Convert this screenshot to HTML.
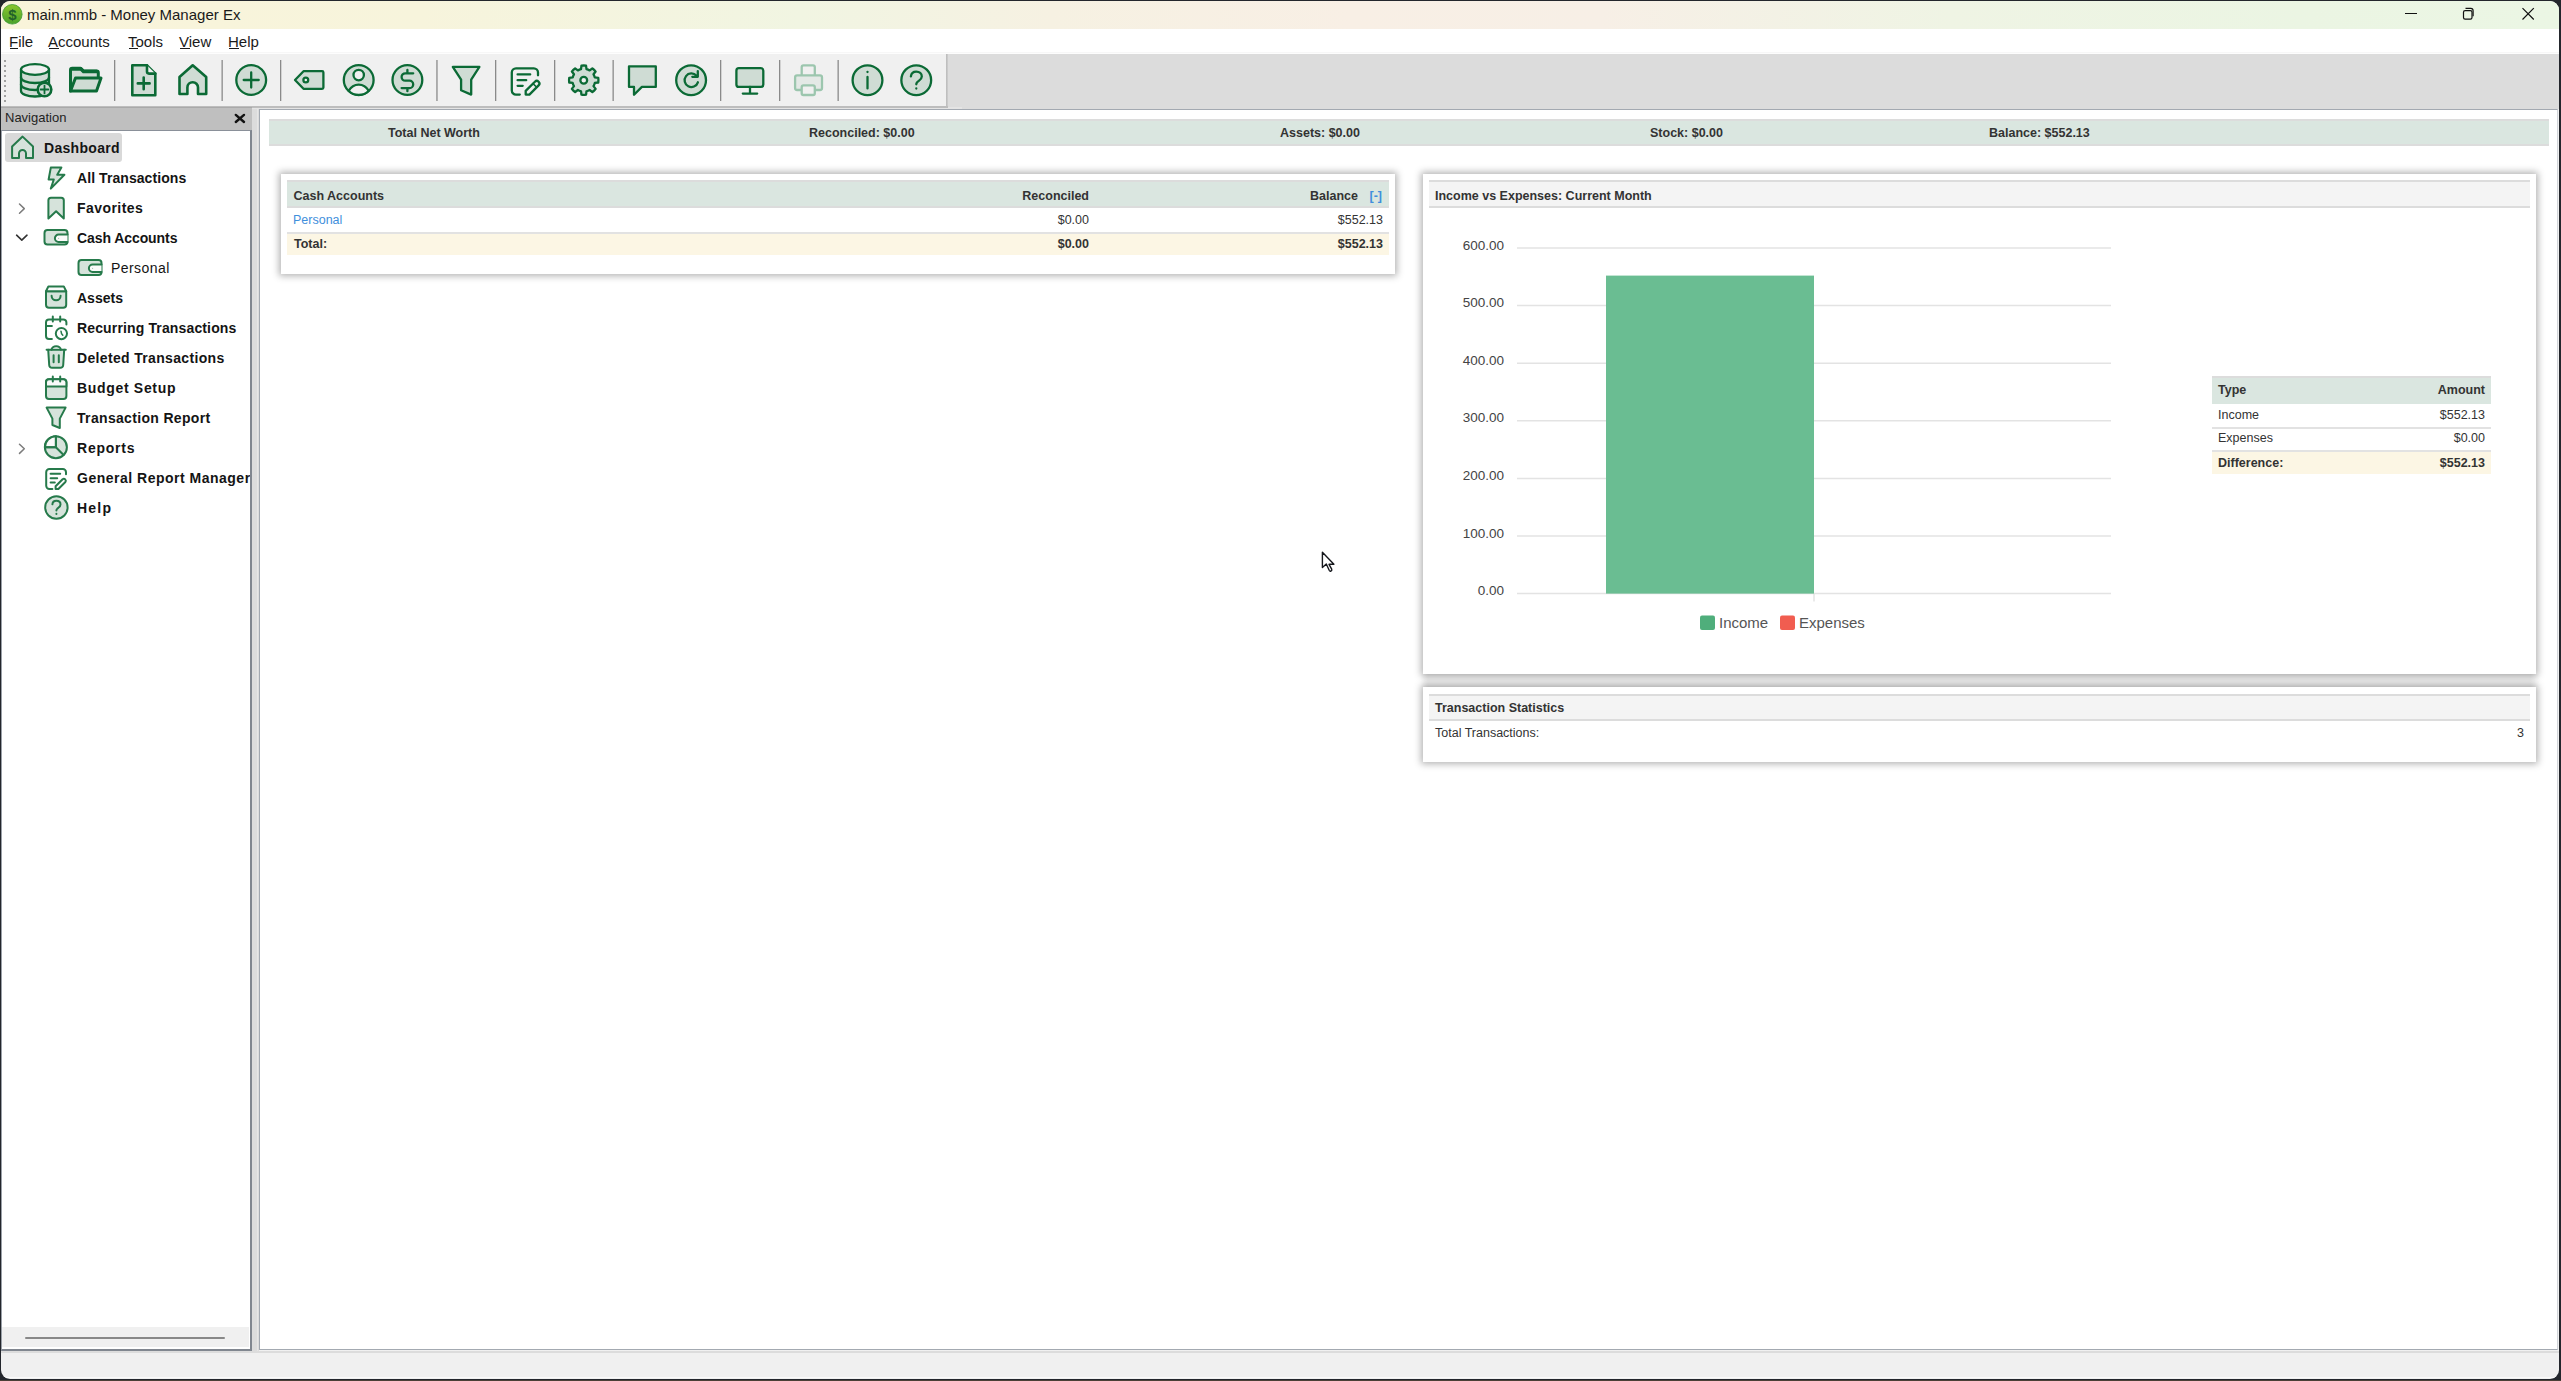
<!DOCTYPE html>
<html><head><meta charset="utf-8">
<style>
*{box-sizing:border-box}
html,body{margin:0;padding:0}
body{width:2561px;height:1381px;position:relative;overflow:hidden;background:#23262c;font-family:"Liberation Sans",sans-serif;color:#222}
.a{position:absolute}
.t{position:absolute;white-space:nowrap;line-height:1}
.mi{font-size:15px;color:#1a1a1a}
.nv{font-size:14px;font-weight:bold;color:#141414}
.d{font-size:12.5px;color:#333}
.b{font-weight:bold}
.ul{position:absolute;height:1px;background:#1a1a1a}
svg.ov{position:absolute;left:0;top:0}
.ti path,.ti circle,.ti rect,.ti line,.ti ellipse{stroke:#0b6a35;stroke-width:2.3;stroke-linecap:round;stroke-linejoin:round}
.ni path,.ni circle,.ni rect,.ni line,.ni ellipse{stroke:#267a4b;stroke-width:2;stroke-linecap:round;stroke-linejoin:round}
.f{fill:#cfdcd4}
.nf{fill:#d6e3db}
.w{fill:#f0f0f0}
.nw{fill:#fafafa}
.n{fill:none}
</style></head><body>
<div class="a" style="left:0;top:1380px;width:2561px;height:1px;background:#4b4037"></div>
<div id="w" class="a" style="left:0;top:0;width:2561px;height:1381px;clip-path:inset(1px 2px 2px 1px round 9px)">
<!-- window base -->
<div class="a" style="left:1px;top:1px;width:2558px;height:1378px;background:#f0f0f0">
  <div class="a" style="left:0;top:0;width:2558px;height:28px;background:linear-gradient(90deg,#f9f4da 0px,#f7f4dc 420px,#f1f5e2 800px,#f6f1e2 1050px,#f8efe5 1350px,#f7efe6 1600px,#eff4e4 1950px,#ebf5e3 2300px,#ebf6e4 2558px)"></div>
  <div class="a" style="left:0;top:28px;width:2558px;height:23px;background:#fff"></div>
  <div class="a" style="left:0;top:51px;width:2558px;height:2px;background:#f7f7f7"></div>
</div>

<!-- app icon -->
<svg class="a" style="left:2px;top:4px" width="21" height="21" viewBox="0 0 21 21">
  <defs><linearGradient id="gicon" x1="0" y1="0" x2="0" y2="1"><stop offset="0" stop-color="#8ac52e"/><stop offset="1" stop-color="#4aa22a"/></linearGradient></defs>
  <circle cx="10.3" cy="10.3" r="9.8" fill="url(#gicon)" stroke="#3e9a34" stroke-width="0.8"/>
  <text x="10.5" y="16.3" text-anchor="middle" font-family="Liberation Sans" font-weight="bold" font-size="15" fill="#22602a">$</text>
</svg>
<div class="t" style="left:27px;top:7px;font-size:15px;color:#1a1a1a">main.mmb - Money Manager Ex</div>
<!-- window controls -->
<svg class="a" style="left:2400px;top:4px" width="140" height="22" viewBox="0 0 140 22">
  <line x1="5" y1="9.5" x2="17" y2="9.5" stroke="#111" stroke-width="1.2"/>
  <rect x="63.5" y="6.6" width="8.5" height="8.5" rx="1.6" fill="none" stroke="#111" stroke-width="1.2"/>
  <path d="M65.5 4.4 h5.3 a2.3 2.3 0 0 1 2.3 2.3 v5.6" fill="none" stroke="#111" stroke-width="1.2"/>
  <path d="M122.5 4.2 L133.8 15.5 M133.8 4.2 L122.5 15.5" stroke="#111" stroke-width="1.2"/>
</svg>

<!-- menu -->
<div class="t mi" style="left:9px;top:34px">File</div><div class="ul" style="left:10px;top:48px;width:8px"></div>
<div class="t mi" style="left:48px;top:34px">Accounts</div><div class="ul" style="left:49px;top:48px;width:10px"></div>
<div class="t mi" style="left:128px;top:34px">Tools</div><div class="ul" style="left:129px;top:48px;width:9px"></div>
<div class="t mi" style="left:179px;top:34px">View</div><div class="ul" style="left:180px;top:48px;width:10px"></div>
<div class="t mi" style="left:228px;top:34px">Help</div><div class="ul" style="left:229px;top:48px;width:10px"></div>

<!-- toolbar -->
<div class="a" style="left:1px;top:53px;width:2558px;height:1px;background:#fdfdfd"></div>
<div class="a" style="left:947px;top:54px;width:1612px;height:55px;background:#dcdcdc"></div>
<div class="a" style="left:1px;top:54px;width:946px;height:52px;background:#f0f0f0"></div>
<div class="a" style="left:1px;top:106px;width:946px;height:2px;background:#b4b4b4"></div>
<div class="a" style="left:946px;top:54px;width:2px;height:54px;background:linear-gradient(90deg,#b9b9b9,#cfcfcf)"></div>

<svg class="ov ti" width="2561" height="1381" viewBox="0 0 2561 1381" style="pointer-events:none">
  <!-- gripper -->
  <g fill="#a0a0a0" style="stroke:none">
    <rect x="4" y="60" width="2" height="2" style="stroke:none"/><rect x="4" y="65" width="2" height="2" style="stroke:none"/><rect x="4" y="70" width="2" height="2" style="stroke:none"/>
    <rect x="4" y="75" width="2" height="2" style="stroke:none"/><rect x="4" y="80" width="2" height="2" style="stroke:none"/><rect x="4" y="85" width="2" height="2" style="stroke:none"/>
    <rect x="4" y="90" width="2" height="2" style="stroke:none"/><rect x="4" y="95" width="2" height="2" style="stroke:none"/><rect x="4" y="100" width="2" height="2" style="stroke:none"/>
  </g>
  <!-- separators -->
  <g fill="#8a8a8a">
    <rect x="114" y="60" width="1.3" height="41" style="stroke:none"/><rect x="221.5" y="60" width="1.3" height="41" style="stroke:none"/>
    <rect x="280" y="60" width="1.3" height="41" style="stroke:none"/><rect x="436.3" y="60" width="1.3" height="41" style="stroke:none"/>
    <rect x="495" y="60" width="1.3" height="41" style="stroke:none"/><rect x="554" y="60" width="1.3" height="41" style="stroke:none"/>
    <rect x="612.5" y="60" width="1.3" height="41" style="stroke:none"/><rect x="720" y="60" width="1.3" height="41" style="stroke:none"/>
    <rect x="779" y="60" width="1.3" height="41" style="stroke:none"/><rect x="837.5" y="60" width="1.3" height="41" style="stroke:none"/>
  </g>
  <!-- database + plus -->
  <g style="stroke-width:3">
    <path class="f" d="M21,69.5 V91 A14,5.5 0 0 0 49,91 V69.5 Z"/>
    <ellipse class="w" cx="35" cy="69.5" rx="14" ry="5.3"/>
    <path class="n" d="M21,77.5 A14,5.5 0 0 0 49,77.5 M21,84.5 A14,5.5 0 0 0 49,84.5"/>
    <circle class="f" cx="44.5" cy="89.5" r="6.8" style="stroke-width:2.6"/>
    <path class="n" d="M44.5,85.6 V93.4 M40.6,89.5 H48.4" style="stroke-width:1.8"/>
  </g>
  <!-- folder open -->
  <path class="f" d="M70.5,91 V70 A1.8,1.8 0 0 1 72.3,68.2 H80.5 L83.5,71 H96.5 A1.8,1.8 0 0 1 98.3,72.8 V77.5" style="stroke-width:3"/>
  <path class="f" d="M70.5,91 L75.5,78 H101 L96.5,91 Z" style="stroke-width:3"/>
  <path class="n" d="M72,69 H81 L83.5,71.5 H97" style="stroke-width:3.5"/>
  <!-- file plus -->
  <path class="f" d="M132.3,65.3 H147 L155.3,73.6 V95.3 H132.3 Z" style="stroke-width:2.6"/>
  <path class="w" d="M147,65.3 V71.6 A2,2 0 0 0 149,73.6 H155.3" style="stroke-width:2.6"/>
  <path class="n" d="M143.7,77.5 V89.3 M137.8,83.4 H149.6" style="stroke-width:2.6"/>
  <!-- home -->
  <path class="f" d="M179.5,94 V77 L192.7,65.3 L206.2,77 V94 H198 V87.5 A5.3,5.3 0 0 0 187.4,87.5 V94 Z" style="stroke-width:2.6"/>
  <!-- circle plus -->
  <circle class="f" cx="251.2" cy="80" r="14.9"/>
  <path class="n" d="M251.2,72.5 V87.5 M243.7,80 H258.7"/>
  <!-- tag -->
  <path class="f" d="M323.4,72.5 V87.5 A1.3,1.3 0 0 1 322.1,88.8 H303.5 L295,80 L303.5,71.2 H322.1 A1.3,1.3 0 0 1 323.4,72.5 Z"/>
  <circle class="w" cx="305.8" cy="80" r="2.4"/>
  <!-- user circle -->
  <circle class="f" cx="358.7" cy="80" r="14.9"/>
  <path class="w" d="M348.6,90.8 C351,86.8 354.5,84.6 358.7,84.6 C362.9,84.6 366.4,86.8 368.8,90.8 C366.2,93.5 362.6,95 358.7,95 C354.8,95 351.2,93.5 348.6,90.8 Z"/>
  <circle class="w" cx="358.7" cy="75.1" r="5.2"/>
  <!-- dollar circle -->
  <circle class="f" cx="407.4" cy="80" r="14.9"/>
  <path class="n" d="M413.2,73.3 H405.3 A3.7,3.7 0 0 0 405.3,80.7 H409.5 A3.7,3.7 0 0 1 409.5,88.1 H401.6 M407.4,70 V73.3 M407.4,88.1 V91.2"/>
  <!-- filter -->
  <path class="f" d="M452.8,66.9 H479.4 L471.2,79.6 V94.6 L461.1,90.2 V79.6 Z"/>
  <!-- report edit -->
  <path class="n" d="M519.8,94.6 H516 A4.2,4.2 0 0 1 511.8,90.4 V72.6 A4.2,4.2 0 0 1 516,68.4 H533.8 A4.2,4.2 0 0 1 538,72.6 V75.3"/>
  <path class="n" d="M517.6,74.4 H530.2 M517.6,80.2 H526.2 M517.6,85.8 H522.7"/>
  <path class="w" d="M525.7,94.6 V90.9 L534.9,81.7 A2.6,2.6 0 0 1 538.6,85.4 L529.4,94.6 Z"/>
  <path class="n" d="M533,83.6 L536.7,87.3" style="stroke-width:1.6"/>
  <!-- gear -->
  <path class="f" d="M581.00,69.14 L581.45,65.68 A14.7,14.7 0 0 1 586.05,65.68 L586.50,69.14 A11.4,11.4 0 0 1 589.63,70.43 L592.39,68.31 A14.7,14.7 0 0 1 595.64,71.56 L593.52,74.32 A11.4,11.4 0 0 1 594.81,77.45 L598.27,77.90 A14.7,14.7 0 0 1 598.27,82.50 L594.81,82.95 A11.4,11.4 0 0 1 593.52,86.08 L595.64,88.84 A14.7,14.7 0 0 1 592.39,92.09 L589.63,89.97 A11.4,11.4 0 0 1 586.50,91.26 L586.05,94.72 A14.7,14.7 0 0 1 581.45,94.72 L581.00,91.26 A11.4,11.4 0 0 1 577.87,89.97 L575.11,92.09 A14.7,14.7 0 0 1 571.86,88.84 L573.98,86.08 A11.4,11.4 0 0 1 572.69,82.95 L569.23,82.50 A14.7,14.7 0 0 1 569.23,77.90 L572.69,77.45 A11.4,11.4 0 0 1 573.98,74.32 L571.86,71.56 A14.7,14.7 0 0 1 575.11,68.31 L577.87,70.43 A11.4,11.4 0 0 1 581.00,69.14 Z"/>
  <circle class="w" cx="583.75" cy="80.2" r="3.4"/>
  <!-- speech bubble -->
  <path class="f" d="M629,66.4 H655.8 V86.9 H641.9 L634,94.8 V86.9 H629 Z"/>
  <!-- refresh circle -->
  <circle class="f" cx="691.1" cy="80.2" r="14.9"/>
  <path class="n" d="M697.9,82.3 A6.8,6.8 0 1 1 696.4,75.6"/>
  <path class="n" d="M697.8,71.2 V76.8 H692.3"/>
  <!-- monitor -->
  <rect class="f" x="736.4" y="68.2" width="26.9" height="18.7" rx="2.5"/>
  <path class="n" d="M750,87 V93.6 M742.8,93.6 H757.2"/>
  <!-- printer disabled -->
  <g style="stroke:#9cc6ae">
    <rect class="w" x="801.7" y="65.3" width="13.1" height="12" rx="1.8" style="stroke:#9cc6ae"/>
    <rect x="795.1" y="75.4" width="26.9" height="14.6" rx="2" style="fill:#e4e9e6;stroke:#9cc6ae"/>
    <rect class="w" x="801.7" y="85.4" width="13.1" height="9.6" rx="1.8" style="stroke:#9cc6ae"/>
  </g>
  <!-- info -->
  <circle class="f" cx="867.5" cy="80.2" r="14.9"/>
  <path class="n" d="M867.5,71.8 V72 M867.5,77 V88.4"/>
  <!-- help -->
  <circle class="f" cx="916.25" cy="80.2" r="14.9"/>
  <path class="n" d="M910.9,76.3 C911.3,73 913.6,71.6 916.3,71.6 C919.4,71.6 921.8,73.6 921.8,76.4 C921.8,79.6 918.5,80.6 917,82.4 C916.5,83 916.3,83.6 916.3,84.3 M916.3,88.4 V88.6"/>
</svg>
<!-- nav panel -->
<div class="a" style="left:252px;top:107px;width:710px;height:2px;background:#e4e4e4"></div>
<div class="a" style="left:1px;top:106px;width:947px;height:1.5px;background:#bdbdbd"></div>
<div class="a" style="left:1px;top:107px;width:251px;height:24px;background:#bfbfbf;border-top:1px solid #a9a9a9"></div>

<div class="t" style="left:5px;top:111px;font-size:13px;color:#1e1e1e">Navigation</div>
<svg class="a" style="left:230px;top:110px" width="20" height="17" viewBox="0 0 20 17"><path d="M5.8 4.9 L14 12 M14 4.9 L5.8 12" stroke="#111" stroke-width="2.4" stroke-linecap="round"/></svg>
<div class="a" style="left:1px;top:130px;width:251px;height:1221px;border:1px solid #9aa0a8;border-right:2px solid #80868f;border-bottom:2px solid #80868f;border-top-color:#8a9099;background:#fff"></div>
<div class="a" style="left:2px;top:1327px;width:247px;height:20px;background:#f0f0f0"></div>
<div class="a" style="left:25px;top:1337px;width:200px;height:2px;background:#888;border-radius:1px"></div>
<div class="a" style="left:252px;top:109px;width:7px;height:1242px;background:#dcdcdc"></div>
<div class="a" style="left:257px;top:109px;width:1px;height:1242px;background:#e6e6e6"></div>
<!-- content frame -->
<div class="a" style="left:259px;top:109px;width:2299px;height:1241px;border:1px solid #a3a9b1;border-right-color:#d2d5da;background:#fff"></div>
<div class="a" style="left:1px;top:1351px;width:2558px;height:2px;background:#dcdcdc"></div>
<div class="a" style="left:1px;top:1377px;width:2558px;height:1px;background:#fafafa"></div>

<!-- nav selection -->
<div class="a" style="left:5px;top:133px;width:117px;height:29px;background:#d9d9d9;border-radius:3px"></div>
<!-- nav text -->
<div class="t nv" style="left:44px;top:141px;letter-spacing:0.3px">Dashboard</div>
<div class="t nv" style="left:77px;top:171px;letter-spacing:0.07px">All Transactions</div>
<div class="t nv" style="left:77px;top:201px;letter-spacing:0.44px">Favorites</div>
<div class="t nv" style="left:77px;top:231px;letter-spacing:-0.08px">Cash Accounts</div>
<div class="t nv" style="left:111px;top:261px;font-weight:normal;letter-spacing:0.43px">Personal</div>
<div class="t nv" style="left:77px;top:291px">Assets</div>
<div class="t nv" style="left:77px;top:321px;letter-spacing:0.14px">Recurring Transactions</div>
<div class="t nv" style="left:77px;top:351px;letter-spacing:0.34px">Deleted Transactions</div>
<div class="t nv" style="left:77px;top:381px;letter-spacing:0.68px">Budget Setup</div>
<div class="t nv" style="left:77px;top:411px;letter-spacing:0.33px">Transaction Report</div>
<div class="t nv" style="left:77px;top:441px;letter-spacing:0.78px">Reports</div>
<div class="a" style="left:2px;top:466px;width:248px;height:25px;overflow:hidden"><div class="t nv" style="left:75px;top:5px;letter-spacing:0.5px">General Report Manager</div></div>
<div class="t nv" style="left:77px;top:501px;letter-spacing:1.2px">Help</div>

<svg class="ov ni" width="2561" height="1381" viewBox="0 0 2561 1381">
  <!-- chevrons -->
  <path d="M19.5,204 L24.3,208.6 L19.5,213.2" fill="none" style="stroke:#7c7c7c;stroke-width:1.5"/>
  <path d="M16.6,235.2 L21.8,240.2 L27,235.2" fill="none" style="stroke:#333;stroke-width:1.6"/>
  <path d="M19.5,444.2 L24.3,448.8 L19.5,453.4" fill="none" style="stroke:#7c7c7c;stroke-width:1.5"/>
  <!-- home -->
  <path class="nf" d="M12.1,158 V146.5 L22.6,136.6 L33,146.5 V158 H26 V153.5 A3.5,3.5 0 0 0 19,153.5 V158 Z"/>
  <!-- bolt -->
  <path class="nf" d="M50.8,167.6 H61.4 L57.2,174.8 H64.4 L50.8,188.6 L53.8,179.5 H48.6 Z"/>
  <!-- bookmark -->
  <path class="nf" d="M48.4,218.5 V200.3 A2.6,2.6 0 0 1 51,197.7 H61.2 A2.6,2.6 0 0 1 63.8,200.3 V218.5 L56.1,211.2 Z"/>
  <!-- wallet cash accounts -->
  <rect class="nf" x="44.5" y="230" width="23" height="14.6" rx="3"/>
  <path class="nw" d="M67.5,234.6 H58.6 A3.7,3.7 0 0 0 58.6,242 H67.5"/>
  <circle cx="58.6" cy="238.3" r="0.6" style="fill:#9fc0ac;stroke:none"/>
  <!-- wallet personal -->
  <rect class="nf" x="78.5" y="260" width="23" height="15" rx="3"/>
  <path class="nw" d="M101.5,264.6 H92.6 A3.7,3.7 0 0 0 92.6,272 H101.5"/>
  <circle cx="92.6" cy="268.3" r="0.6" style="fill:#9fc0ac;stroke:none"/>
  <!-- assets box -->
  <path class="nf" d="M46,291.3 V304.7 A3,3 0 0 0 49,307.7 H63.2 A3,3 0 0 0 66.2,304.7 V291.3 Z"/>
  <path class="nw" d="M46,291.3 L48.4,286.4 H63.8 L66.2,291.3 Z"/>
  <path class="n" d="M51.6,295.8 A4.5,4.5 0 0 0 60.6,295.8"/>
  <!-- recurring calendar clock -->
  <path class="n" d="M51.9,339 H49 A3,3 0 0 1 46,336 V322.4 A3,3 0 0 1 49,319.4 H63.4 A3,3 0 0 1 66.4,322.4 V324.6"/>
  <path class="n" d="M52.8,316.6 V321.6 M60.2,316.6 V321.6 M46,326 H51.9"/>
  <circle class="n" cx="61.4" cy="333.6" r="5.6"/>
  <path class="n" d="M61,331.2 L61.6,333.8 L62.8,335.2" style="stroke-width:1.5"/>
  <!-- trash -->
  <path class="nf" d="M48.2,349.8 L49.2,365 A2.8,2.8 0 0 0 52,367.8 H60.4 A2.8,2.8 0 0 0 63.2,365 L64.2,349.8"/>
  <path class="nw" d="M51.6,349.8 A4.6,3.6 0 0 1 60.8,349.8"/>
  <path class="n" d="M46.6,349.8 H65.8 M53.6,355.3 V362.2 M58.8,355.3 V362.2"/>
  <!-- budget calendar -->
  <rect class="nf" x="46" y="379.3" width="20.4" height="19.6" rx="3"/>
  <path class="nw" d="M46,386.4 V382.3 A3,3 0 0 1 49,379.3 H63.4 A3,3 0 0 1 66.4,382.3 V386.4 Z"/>
  <path class="n" d="M52.8,376.6 V381.6 M60.2,376.6 V381.6"/>
  <!-- filter -->
  <path class="nf" d="M46.6,407.6 H65.6 L59.8,418.6 V428 L52.4,425 V418.6 Z"/>
  <!-- pie -->
  <circle class="nf" cx="55.9" cy="447.2" r="11"/>
  <path class="nw" d="M55.9,447.2 V436.2 A11,11 0 0 0 44.9,447.2 Z"/>
  <path class="n" d="M55.9,436.4 V447.2 H45 M55.9,447.2 L63.6,455"/>
  <!-- report edit -->
  <path class="n" d="M52.4,489 H49.4 A3.2,3.2 0 0 1 46.2,485.8 V472.2 A3.2,3.2 0 0 1 49.4,469 H62.8 A3.2,3.2 0 0 1 66,472.2 V474.2"/>
  <path class="n" d="M50.6,473.8 H60.2 M50.6,478.2 H57.2 M50.6,482.4 H54.8"/>
  <path class="nw" d="M55.6,489 V486.2 L62.6,479.2 A2,2 0 0 1 65.4,482 L58.4,489 Z"/>
  <!-- help -->
  <circle class="nf" cx="56.4" cy="507.5" r="11.2"/>
  <path class="n" d="M52.4,504.3 C52.6,501.8 54.3,500.8 56.4,500.8 C58.8,500.8 60.5,502.3 60.5,504.4 C60.5,506.8 58,507.6 57,509 C56.6,509.5 56.4,510 56.4,510.6 M56.4,513.8 V514"/>
</svg>
<!-- dashboard -->
<div class="a" style="left:269px;top:119px;width:2280px;height:27px;background:#dae6e0;border-top:2px solid #dcdcdc;border-bottom:2px solid #dcdcdc"></div>
<div class="t d b" style="left:388px;top:127px">Total Net Worth</div>
<div class="t d b" style="left:809px;top:127px">Reconciled: $0.00</div>
<div class="t d b" style="left:1280px;top:127px">Assets: $0.00</div>
<div class="t d b" style="left:1650px;top:127px">Stock: $0.00</div>
<div class="t d b" style="left:1989px;top:127px">Balance: $552.13</div>

<!-- cash accounts card -->
<div class="a" style="left:281px;top:174px;width:1114px;height:100px;background:#fff;box-shadow:0 0 7px 2px rgba(0,0,0,0.3)"></div>
<div class="a" style="left:287px;top:180px;width:1102px;height:28px;background:#dae6e0;border-top:2px solid #dcdcdc;border-bottom:2px solid #dcdcdc"></div>
<div class="a" style="left:287px;top:232px;width:1102px;height:2px;background:#e2e2e2"></div>
<div class="a" style="left:287px;top:234px;width:1102px;height:21px;background:#fcf6e4"></div>
<div class="t d b" style="left:293.5px;top:189.5px">Cash Accounts</div>
<div class="t d b" style="right:1472px;top:189.5px">Reconciled</div>
<div class="t d b" style="right:1203px;top:189.5px">Balance</div>
<div class="t d b" style="left:1369.5px;top:189.5px;color:#3f8fdc">[-]</div>
<div class="t d" style="left:293px;top:214px;color:#3f8fdc">Personal</div>
<div class="t d" style="right:1472px;top:214px">$0.00</div>
<div class="t d" style="right:1178px;top:214px">$552.13</div>
<div class="t d b" style="left:294px;top:238px">Total:</div>
<div class="t d b" style="right:1472px;top:238px">$0.00</div>
<div class="t d b" style="right:1178px;top:238px">$552.13</div>

<div class="a" style="left:1420px;top:674px;width:1120px;height:13px;background:linear-gradient(90deg,rgba(232,232,232,0) 0px,#eeeeee 8px,#eeeeee 1110px,rgba(238,238,238,0) 1120px)"></div>
<!-- income vs expenses card -->
<div class="a" style="left:1423px;top:174px;width:1113px;height:500px;background:#fff;box-shadow:0 0 7px 2px rgba(0,0,0,0.3)"></div>
<div class="a" style="left:1429px;top:180px;width:1101px;height:28px;background:#f4f4f4;border-top:2px solid #dcdcdc;border-bottom:2px solid #dcdcdc"></div>
<div class="t d b" style="left:1435px;top:190px">Income vs Expenses: Current Month</div>
<!-- chart -->
<svg class="a" style="left:1423px;top:174px" width="1113" height="500" viewBox="1423 174 1113 500">
  <g stroke="#e3e3e3" stroke-width="1.5">
    <line x1="1517" y1="248" x2="2111" y2="248"/><line x1="1517" y1="305.6" x2="2111" y2="305.6"/>
    <line x1="1517" y1="363.2" x2="2111" y2="363.2"/><line x1="1517" y1="420.8" x2="2111" y2="420.8"/>
    <line x1="1517" y1="478.4" x2="2111" y2="478.4"/><line x1="1517" y1="536" x2="2111" y2="536"/>
    <line x1="1517" y1="593.6" x2="2111" y2="593.6"/>
    <line x1="1814" y1="594" x2="1814" y2="601.5"/>
  </g>
  <rect x="1606" y="275.6" width="208" height="318" fill="#6abd92"/>
  <rect x="1700" y="615.5" width="15" height="14.5" rx="2" fill="#4fae7b"/>
  <rect x="1780" y="615.5" width="15" height="14.5" rx="2" fill="#f15d50"/>
</svg>
<div class="t" style="right:1057px;top:239px;font-size:13.5px;color:#444">600.00</div>
<div class="t" style="right:1057px;top:296px;font-size:13.5px;color:#444">500.00</div>
<div class="t" style="right:1057px;top:354px;font-size:13.5px;color:#444">400.00</div>
<div class="t" style="right:1057px;top:411px;font-size:13.5px;color:#444">300.00</div>
<div class="t" style="right:1057px;top:469px;font-size:13.5px;color:#444">200.00</div>
<div class="t" style="right:1057px;top:527px;font-size:13.5px;color:#444">100.00</div>
<div class="t" style="right:1057px;top:584px;font-size:13.5px;color:#444">0.00</div>
<div class="t" style="left:1719px;top:615px;font-size:15px;color:#555">Income</div>
<div class="t" style="left:1799px;top:615px;font-size:15px;color:#555">Expenses</div>
<!-- type table -->
<div class="a" style="left:2212px;top:376px;width:279px;height:28px;background:#dae6e0;border-top:2px solid #dcdcdc"></div>
<div class="a" style="left:2212px;top:427px;width:279px;height:2px;background:#e2e2e2"></div>
<div class="a" style="left:2212px;top:450px;width:279px;height:2px;background:#e2e2e2"></div>
<div class="a" style="left:2212px;top:452px;width:279px;height:22px;background:#fcf6e4"></div>
<div class="t d b" style="left:2218px;top:384px">Type</div>
<div class="t d b" style="right:76px;top:384px">Amount</div>
<div class="t d" style="left:2218px;top:409px">Income</div>
<div class="t d" style="right:76px;top:409px">$552.13</div>
<div class="t d" style="left:2218px;top:432px">Expenses</div>
<div class="t d" style="right:76px;top:432px">$0.00</div>
<div class="t d b" style="left:2218px;top:457px">Difference:</div>
<div class="t d b" style="right:76px;top:457px">$552.13</div>

<!-- transaction statistics card -->
<div class="a" style="left:1423px;top:687px;width:1113px;height:75px;background:#fff;box-shadow:0 0 7px 2px rgba(0,0,0,0.3)"></div>
<div class="a" style="left:1429px;top:694px;width:1101px;height:27px;background:#f4f4f4;border-top:2px solid #dcdcdc;border-bottom:2px solid #dcdcdc"></div>
<div class="t d b" style="left:1435px;top:702px">Transaction Statistics</div>
<div class="t d" style="left:1435px;top:727px">Total Transactions:</div>
<div class="t d" style="right:37px;top:727px">3</div>

</div>
<!-- cursor -->
<svg class="a" style="left:1318px;top:548px" width="22" height="28" viewBox="0 0 22 28">
  <path d="M4.4,4.3 V19.6 L8.3,16 L11.2,22.3 C11.6,23.1 12.4,23.3 13.1,23 C13.8,22.6 14,21.9 13.7,21.2 L11,16.3 H15.9 Z" fill="#fff" stroke="#15171c" stroke-width="1.4" stroke-linejoin="round"/>
</svg>
</body></html>
